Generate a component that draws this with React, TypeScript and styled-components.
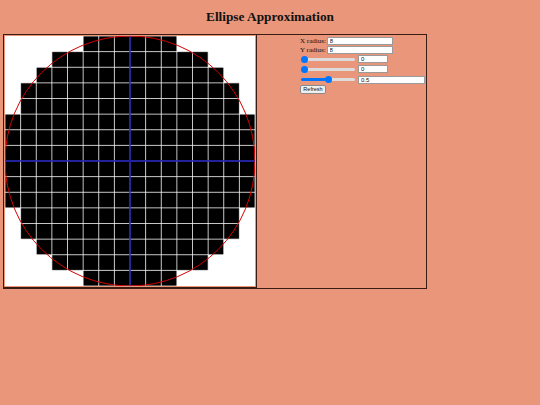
import React, { useState } from 'react';
import styled, { createGlobalStyle } from 'styled-components';

const GlobalStyle = createGlobalStyle`
  html, body {
    margin: 0;
    padding: 0;
    background: #e9967a;
    font-family: "Liberation Serif", "Times New Roman", serif;
  }
`;

const Title = styled.h1`
  margin: 0;
  height: 34px;
  padding-top: 9px;
  box-sizing: border-box;
  text-align: center;
  font-size: 13.3px;
  font-weight: bold;
  color: #111;
`;

// table with the canvas on the left and the controls on the right
const Panel = styled.div`
  display: flex;
  align-items: flex-start;
  margin-left: 3px;
  width: 424px;
  box-sizing: border-box;
  border: 1px solid #3a1c12;
`;

const CanvasCell = styled.div`
  padding: 1px;
  border-right: 1px solid #3a1c12;
  border-bottom: 1px solid #3a1c12;
  line-height: 0;
`;

const Controls = styled.div`
  flex: 1;
  padding: 1px 0 0 43px;
  display: flex;
  flex-direction: column;
`;

const Row = styled.div<{ $h: number }>`
  display: flex;
  align-items: center;
  height: ${(p) => p.$h}px;
`;

const Label = styled.span`
  font-size: 7px;
  line-height: 8px;
  color: #111;
  margin-right: 1px;
`;

const TextBox = styled.input<{ $w: number }>`
  width: ${(p) => p.$w}px;
  height: 8px;
  box-sizing: border-box;
  margin: 0;
  padding: 0 2px;
  border: 1px solid #9a9a9a;
  background: #fff;
  font-family: "Liberation Sans", Arial, sans-serif;
  font-size: 6px;
  color: #111;
  outline: none;
`;

const Range = styled.input<{ $fill: number }>`
  -webkit-appearance: none;
  appearance: none;
  width: 54px;
  height: 8px;
  margin: 0 3px 0 1px;
  padding: 0;
  background: transparent;

  &::-webkit-slider-runnable-track {
    height: 3px;
    border-radius: 2px;
    background: linear-gradient(
      to right,
      #0075ff 0%,
      #0075ff ${(p) => p.$fill}%,
      #dcdcdc ${(p) => p.$fill}%,
      #dcdcdc 100%
    );
  }

  &::-webkit-slider-thumb {
    -webkit-appearance: none;
    width: 7px;
    height: 7px;
    margin-top: -2px;
    border-radius: 50%;
    background: #0075ff;
    border: none;
  }
`;

const Button = styled.button`
  margin: 0;
  padding: 0;
  width: 26px;
  height: 9px;
  box-sizing: border-box;
  border: 1px solid #8a8a8a;
  border-radius: 2px;
  background: #efefef;
  font-family: "Liberation Sans", Arial, sans-serif;
  font-size: 5.5px;
  line-height: 7px;
  color: #111;
`;

const SIZE = 250;

const EllipseGrid: React.FC<{ rx: number; ry: number; threshold: number }> = ({ rx, ry }) => {
  const cols = rx * 2;
  const rows = ry * 2;
  const cw = SIZE / cols;
  const ch = SIZE / rows;
  const cells: React.ReactNode[] = [];
  for (let j = 0; j < rows; j++) {
    for (let i = 0; i < cols; i++) {
      const x = (i + 0.5 - rx) / rx;
      const y = (j + 0.5 - ry) / ry;
      if (x * x + y * y <= 1) {
        cells.push(<rect key={`${i}-${j}`} x={i * cw} y={j * ch} width={cw} height={ch} fill="#000" />);
      }
    }
  }
  const lines: React.ReactNode[] = [];
  for (let i = 0; i <= cols; i++) {
    lines.push(<line key={`v${i}`} x1={i * cw} y1={0} x2={i * cw} y2={SIZE} stroke="#ffffff" strokeWidth={0.7} />);
  }
  for (let j = 0; j <= rows; j++) {
    lines.push(<line key={`h${j}`} x1={0} y1={j * ch} x2={SIZE} y2={j * ch} stroke="#ffffff" strokeWidth={0.7} />);
  }
  return (
    <svg width={SIZE} height={SIZE} viewBox={`0 0 ${SIZE} ${SIZE}`} style={{ background: '#fff' }}>
      {cells}
      {lines}
      <line x1={SIZE / 2} y1={0} x2={SIZE / 2} y2={SIZE} stroke="#1010b0" strokeWidth={1.4} />
      <line x1={0} y1={SIZE / 2} x2={SIZE} y2={SIZE / 2} stroke="#1010b0" strokeWidth={1.4} />
      <ellipse cx={SIZE / 2} cy={SIZE / 2} rx={SIZE / 2} ry={SIZE / 2} fill="none" stroke="#d40000" strokeWidth={1} />
    </svg>
  );
};

const App: React.FC = () => {
  const [rx, setRx] = useState('8');
  const [ry, setRy] = useState('8');
  const [a, setA] = useState(0);
  const [b, setB] = useState(0);
  const [t, setT] = useState(0.5);

  return (
    <>
      <GlobalStyle />
      <Title>Ellipse Approximation</Title>
      <Panel>
        <CanvasCell>
          <EllipseGrid rx={Number(rx) || 8} ry={Number(ry) || 8} threshold={t} />
        </CanvasCell>
        <Controls>
          <Row $h={9}>
            <Label>X radius:</Label>
            <TextBox $w={66} value={rx} onChange={(e) => setRx(e.target.value)} />
          </Row>
          <Row $h={9}>
            <Label>Y radius:</Label>
            <TextBox $w={66} value={ry} onChange={(e) => setRy(e.target.value)} />
          </Row>
          <Row $h={10}>
            <Range type="range" min={0} max={1} step={0.01} value={a} $fill={a * 100} onChange={(e) => setA(Number(e.target.value))} />
            <TextBox $w={30} value={String(a)} readOnly />
          </Row>
          <Row $h={10}>
            <Range type="range" min={0} max={1} step={0.01} value={b} $fill={b * 100} onChange={(e) => setB(Number(e.target.value))} />
            <TextBox $w={30} value={String(b)} readOnly />
          </Row>
          <Row $h={11}>
            <Range type="range" min={0} max={1} step={0.01} value={t} $fill={t * 100} onChange={(e) => setT(Number(e.target.value))} />
            <TextBox $w={67} value={String(t)} readOnly />
          </Row>
          <Row $h={9}>
            <Button>Refresh</Button>
          </Row>
        </Controls>
      </Panel>
    </>
  );
};

export default App;
